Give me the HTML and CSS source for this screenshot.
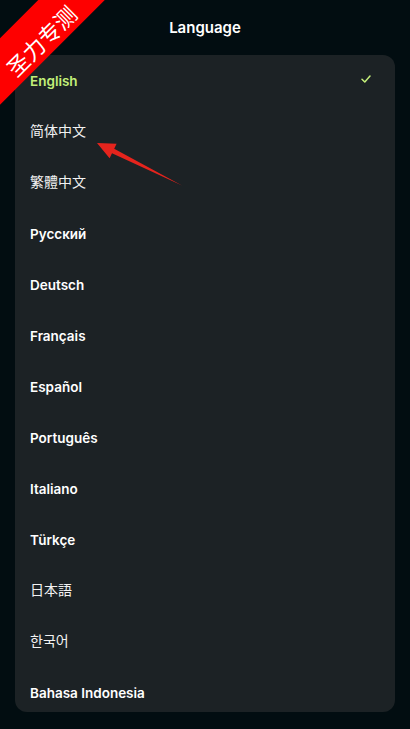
FILE: index.html
```html
<!DOCTYPE html>
<html lang="en">
<head>
<meta charset="utf-8">
<title>Language</title>
<link rel="stylesheet" href="styles.css">
</head>
<body>
<div class="page">
  <header class="topbar">
    <svg class="back" width="10" height="14" viewBox="0 0 10 14"><path d="M8 1 L2 7 L8 13" fill="none" stroke="#fff" stroke-width="2" stroke-linecap="round" stroke-linejoin="round"/></svg>
    <h1 class="title">Language</h1>
  </header>
  <main class="card">
    <div class="row active"><span class="label">English</span>
      <svg class="check" width="10" height="8" viewBox="0 0 10 8"><path d="M1 4.2 L3.8 7 L9 1" fill="none" stroke="#c3ef79" stroke-width="1.5" stroke-linecap="round" stroke-linejoin="round"/></svg>
    </div>
    <div class="row"><span class="label cjk sc">简体中文</span></div>
    <div class="row"><span class="label cjk tc">繁體中文</span></div>
    <div class="row"><span class="label">Русский</span></div>
    <div class="row"><span class="label">Deutsch</span></div>
    <div class="row"><span class="label">Français</span></div>
    <div class="row"><span class="label">Español</span></div>
    <div class="row"><span class="label">Português</span></div>
    <div class="row"><span class="label">Italiano</span></div>
    <div class="row"><span class="label">Türkçe</span></div>
    <div class="row"><span class="label cjk jp">日本語</span></div>
    <div class="row"><span class="label cjk kr">한국어</span></div>
    <div class="row"><span class="label">Bahasa Indonesia</span></div>
  </main>
  <svg class="arrow" width="410" height="729" viewBox="0 0 410 729"><polygon points="97,143 116.6,143.8 114.2,148.8 182,185.5 112,153.2 109.6,158.2" fill="#e5241d"/></svg>
  <div class="ribbon"><span class="ribbon-text">圣力专测</span></div>
</div>
</body>
</html>
```
FILE: styles.css
```css
html, body {
  margin: 0;
  padding: 0;
  background: #020d11;
}
.page {
  position: relative;
  width: 410px;
  height: 729px;
  overflow: hidden;
  font-family: "Inter", "Liberation Sans", sans-serif;
  color: #ffffff;
}
.topbar {
  position: relative;
  height: 55px;
  display: flex;
  align-items: center;
  justify-content: center;
}
.back {
  position: absolute;
  left: 14px;
  top: 21px;
}
.title {
  margin: 0;
  font-size: 15px;
  font-weight: 600;
  line-height: 1;
}
.card {
  margin: 0 15px;
  height: 657px;
  background: #1c2225;
  border-radius: 12px;
  overflow: hidden;
}
.row {
  height: 51px;
  display: flex;
  align-items: center;
  justify-content: space-between;
  padding: 0 24px 0 15px;
}
.label {
  font-size: 13.5px;
  font-weight: 600;
  color: #ffffff;
}
.active .label {
  color: #c3ef79;
}
.cjk {
  font-weight: 400;
  font-size: 14px;
  color: #f2f2f2;
  padding-bottom: 3px;
}
.sc { font-family: "Noto Sans CJK SC", sans-serif; }
.tc { font-family: "Noto Sans CJK TC", sans-serif; }
.jp { font-family: "Noto Sans CJK JP", sans-serif; }
.kr { font-family: "Noto Sans CJK KR", sans-serif; }
.check {
  display: block;
  margin-top: -3px;
}
.arrow {
  position: absolute;
  left: 0;
  top: 0;
  pointer-events: none;
}
.ribbon {
  position: absolute;
  left: -64px;
  top: 12px;
  width: 200px;
  height: 47px;
  background: #fe0000;
  transform: rotate(-45deg);
  display: flex;
  justify-content: center;
  align-items: flex-start;
}
.ribbon-text {
  font-family: "Noto Sans CJK SC", sans-serif;
  font-size: 22px;
  line-height: 31px;
  padding-top: 15px;
  color: #ffffff;
}
```
